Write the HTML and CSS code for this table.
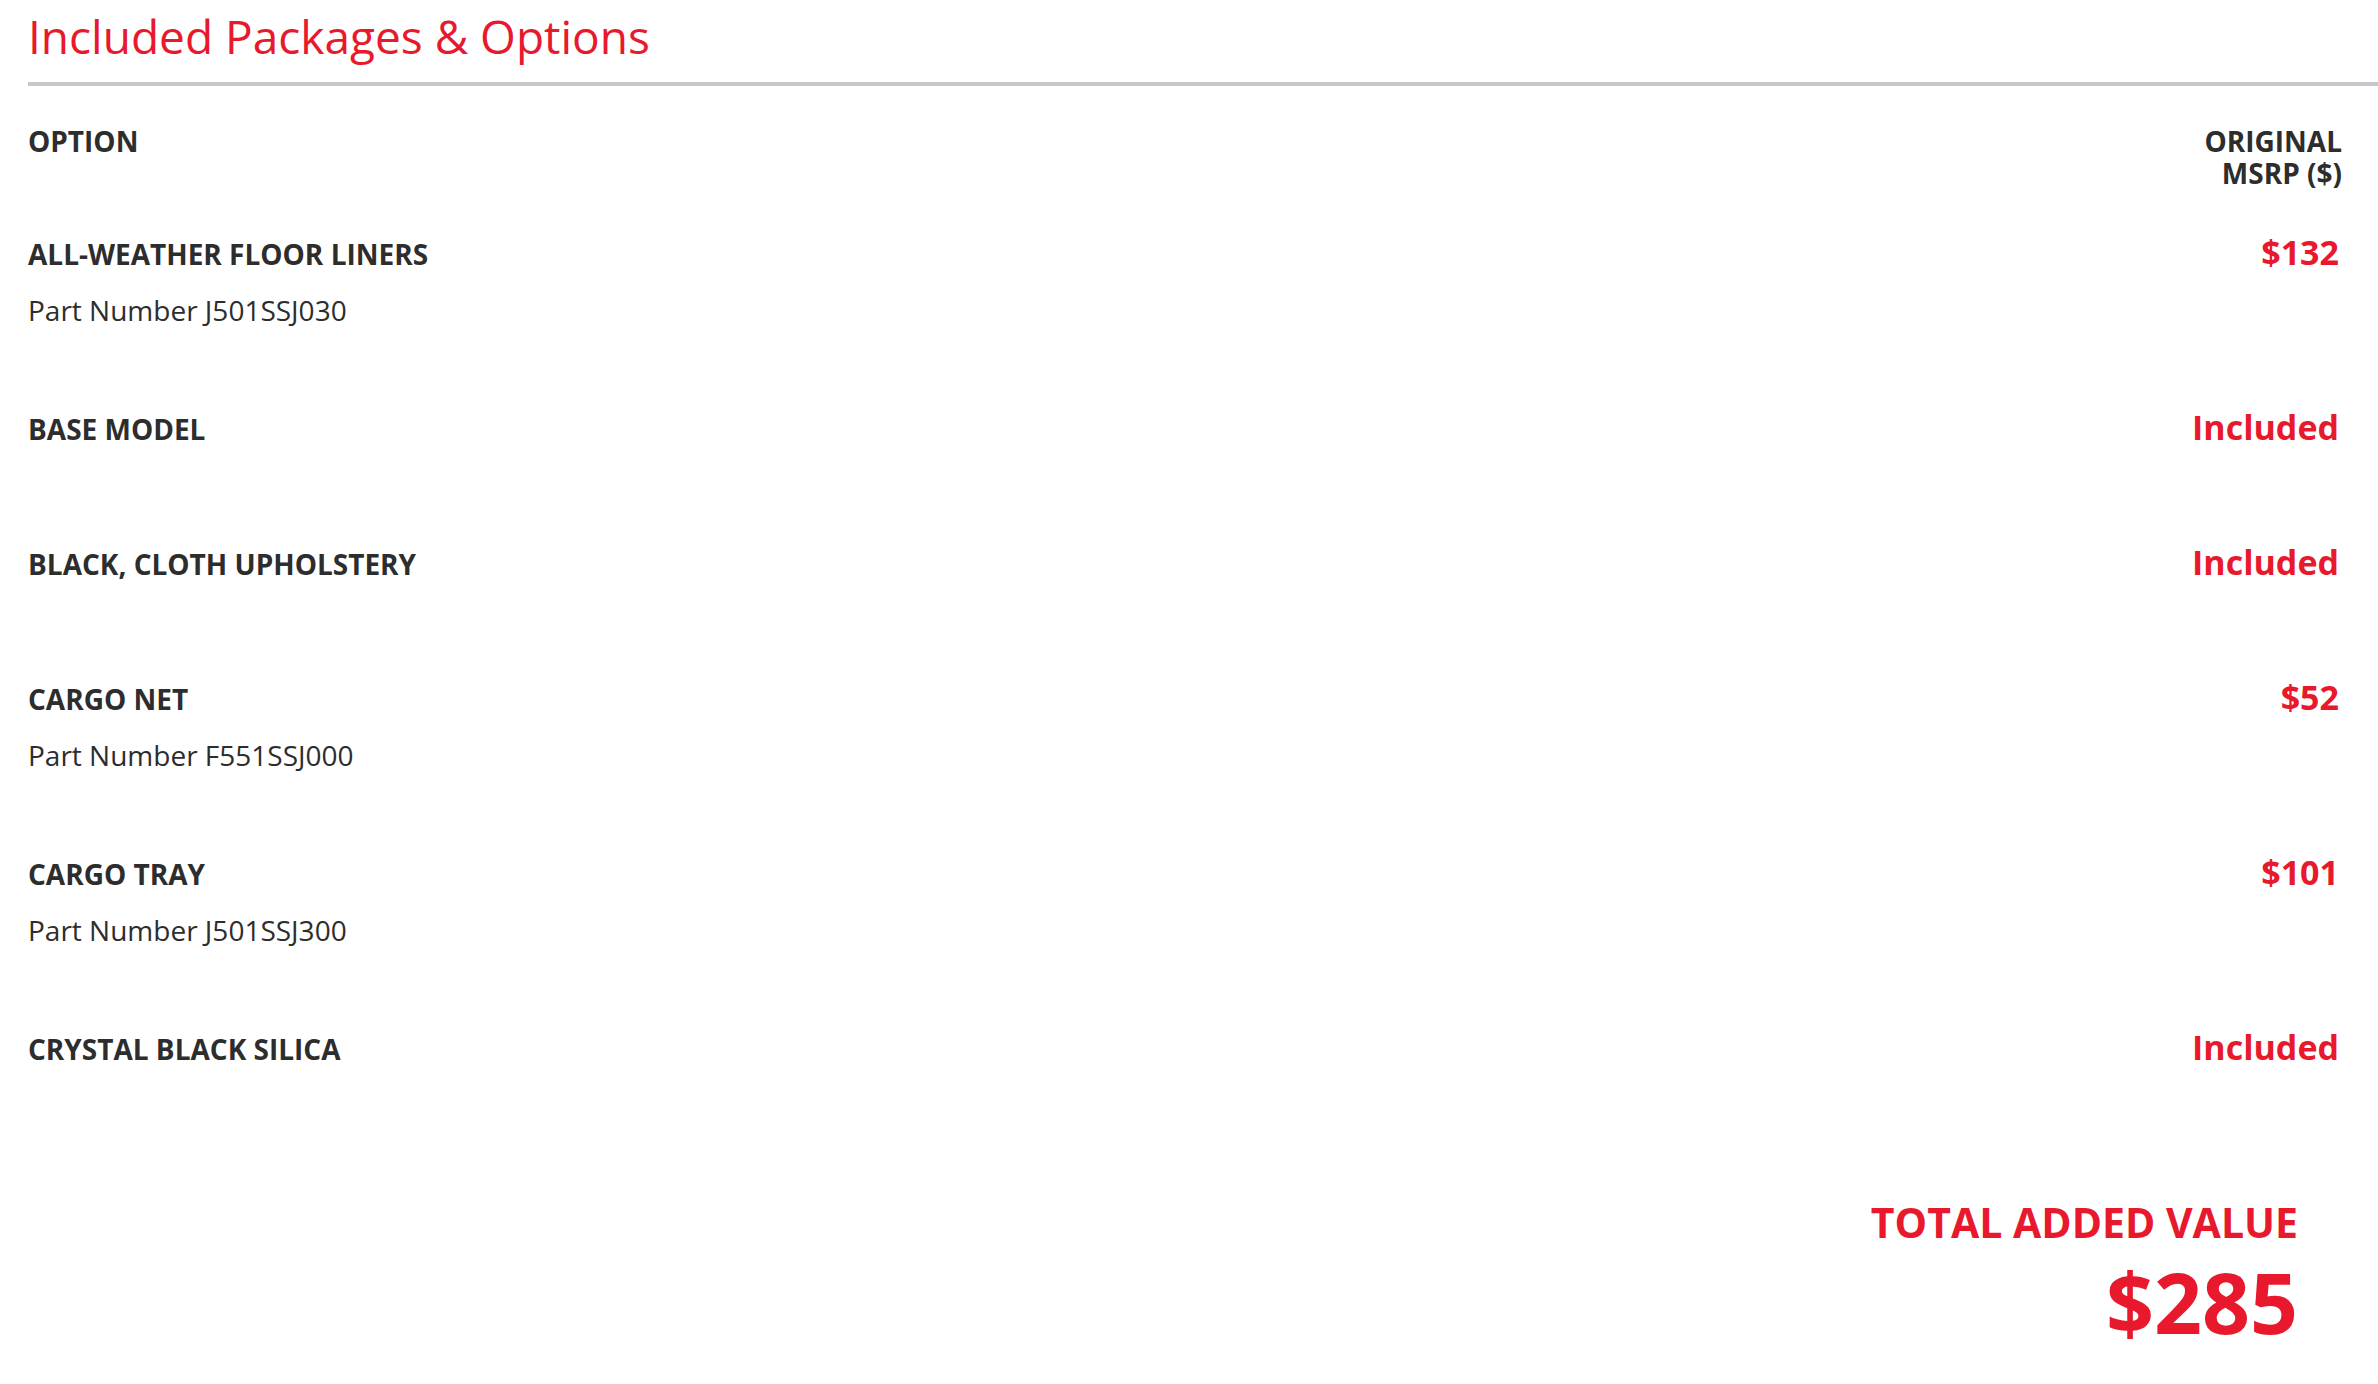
FILE: index.html
```html
<!DOCTYPE html>
<html lang="en">
<head>
<meta charset="utf-8">
<title>Included Packages &amp; Options</title>
<link rel="stylesheet" href="styles.css">
</head>
<body>
<div class="page">
  <h2 class="title">Included Packages &amp; Options</h2>
  <div class="options">
    <div class="row head">
      <div class="col-name">OPTION</div>
      <div class="col-price">ORIGINAL MSRP ($)</div>
    </div>
    <div class="row">
      <div class="col-name">
        <div class="name">ALL-WEATHER FLOOR LINERS</div>
        <div class="part">Part Number J501SSJ030</div>
      </div>
      <div class="price">$132</div>
    </div>
    <div class="row">
      <div class="col-name">
        <div class="name">BASE MODEL</div>
      </div>
      <div class="price">Included</div>
    </div>
    <div class="row">
      <div class="col-name">
        <div class="name">BLACK, CLOTH UPHOLSTERY</div>
      </div>
      <div class="price">Included</div>
    </div>
    <div class="row">
      <div class="col-name">
        <div class="name">CARGO NET</div>
        <div class="part">Part Number F551SSJ000</div>
      </div>
      <div class="price">$52</div>
    </div>
    <div class="row">
      <div class="col-name">
        <div class="name">CARGO TRAY</div>
        <div class="part">Part Number J501SSJ300</div>
      </div>
      <div class="price">$101</div>
    </div>
    <div class="row">
      <div class="col-name">
        <div class="name">CRYSTAL BLACK SILICA</div>
      </div>
      <div class="price">Included</div>
    </div>
  </div>
  <div class="total">
    <div class="total-label">TOTAL ADDED VALUE</div>
    <div class="total-value">$285</div>
  </div>
</div>
</body>
</html>
```
FILE: styles.css
```css
html, body {
  margin: 0;
  padding: 0;
  background: #ffffff;
}

body {
  font-family: "Open Sans", "Noto Sans", "Liberation Sans", sans-serif;
  color: #2d2d2d;
}

.page {
  padding: 8px 0 0 28px;
}

.title {
  margin: 0;
  font-size: 46px;
  line-height: 56px;
  font-weight: 400;
  color: #e8192c;
  padding-bottom: 18px;
  border-bottom: 4px solid #c8c8c8;
}

.options {
  display: flex;
  flex-direction: column;
}

.row {
  display: flex;
  justify-content: space-between;
  align-items: flex-start;
  padding: 40px 36px 39px 0;
}

.row.head {
  padding: 39px 36px 5px 0;
  font-size: 28px;
  line-height: 32px;
  font-weight: 700;
}

.col-price {
  width: 160px;
  text-align: right;
}

.name {
  font-size: 28px;
  line-height: 40px;
  font-weight: 700;
}

.part {
  font-size: 28px;
  line-height: 40px;
  font-weight: 400;
  margin-top: 16px;
}

.price {
  font-size: 34px;
  line-height: 36px;
  font-weight: 700;
  color: #e8192c;
  min-height: 56px;
  padding-right: 3px;
  text-align: right;
}

.total {
  margin-top: 73px;
  padding-right: 80px;
  display: flex;
  flex-direction: column;
  align-items: flex-end;
  color: #e8192c;
  font-weight: 700;
}

.total-label {
  font-size: 41px;
  line-height: 50px;
}

.total-value {
  margin-top: 10px;
  font-size: 84px;
  line-height: 90px;
}
```
